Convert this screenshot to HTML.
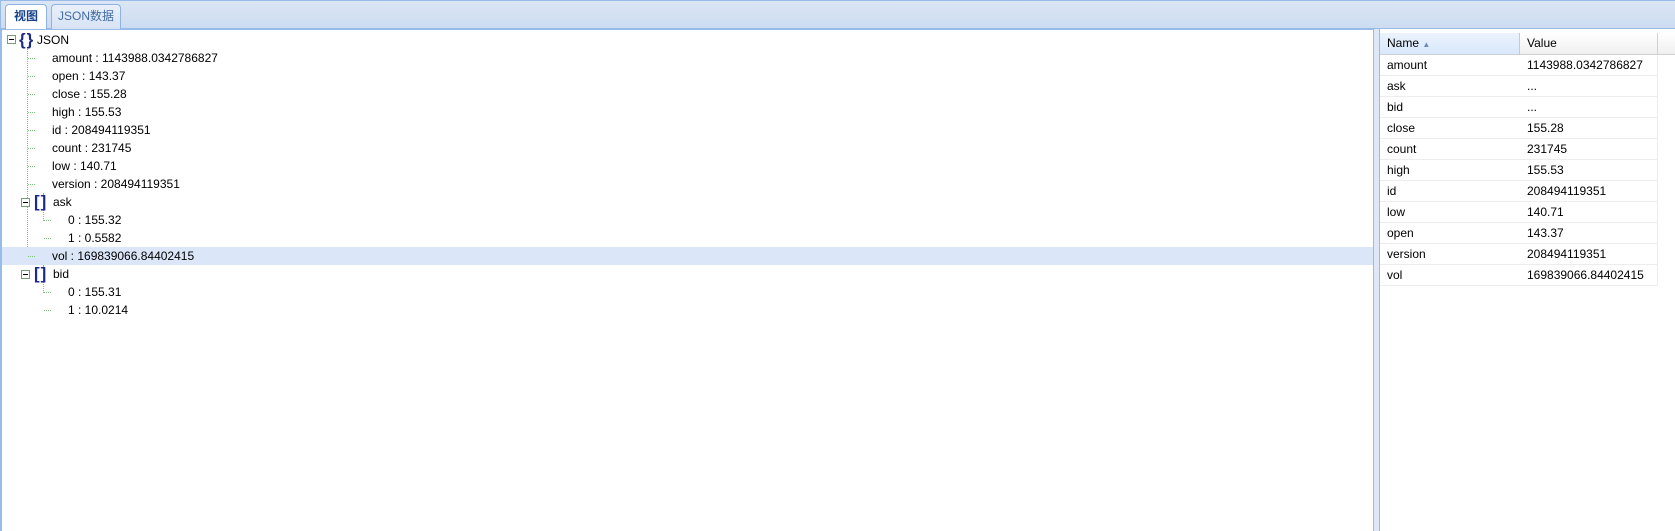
<!DOCTYPE html>
<html><head><meta charset="utf-8"><style>
*{margin:0;padding:0;box-sizing:border-box}
body{width:1675px;height:531px;overflow:hidden;background:#fff;font-family:"Liberation Sans","Noto Sans CJK SC",sans-serif;font-size:12px;color:#000;position:relative}
.bar{position:absolute;left:0;top:0;width:1675px;height:29px;background:linear-gradient(#dbe6f5,#cddcf1);border-top:1px solid #99bbe8;border-left:1px solid #99bbe8;border-bottom:1px solid #99bbe8}
.tab{position:absolute;top:3px;height:25px;border:1px solid #8db2e3;border-bottom:none;border-radius:4px 4px 0 0;line-height:22px;text-align:center;font-size:12px}
.t1{left:4px;width:42px;background:#fff;color:#15428b;font-weight:bold;height:26px}
.t2{left:50px;width:70px;background:linear-gradient(#e9f0fa,#d7e3f4);color:#416aa3}
.left{position:absolute;left:0;top:29px;width:1373px;height:502px;border-left:2px solid #99bbe8;border-top:1px solid #99bbe8}
.split{position:absolute;left:1373px;top:29px;width:7px;height:502px;background:#dfe8f6;border-left:1px solid #99bbe8;border-right:1px solid #99bbe8}
.row{position:absolute;left:0;height:18px;line-height:18px;width:1371px;white-space:nowrap}
.hl{background:#dbe7f8}
.vl{position:absolute;border-left:1px dotted #7cc47c}
.hd{position:absolute;border-top:1px dotted #7cc47c;width:7px}
.box{position:absolute;width:9px;height:9px;border:1px solid #7a9a7a;background:#fff}
.box:after{content:"";position:absolute;left:1px;top:3px;width:5px;height:1px;background:#000}
.ic{position:absolute;color:#1e2a8a;font-weight:bold;font-size:17px;line-height:17px;letter-spacing:1px}
.right{position:absolute;left:1380px;top:30px;width:295px;height:501px}
.hdr{position:absolute;top:3px;height:22px;line-height:21px;padding-left:7px;border-bottom:1px solid #d0d0d0;border-right:1px solid #d0d0d0;background:linear-gradient(#fff,#f0f0f0)}
.r{position:absolute;left:0;width:278px;height:21px;line-height:20px;border-bottom:1px solid #ededed;border-right:1px solid #ededed}
.r span{position:absolute;left:7px}.r b{font-weight:normal;position:absolute;left:147px}
</style></head><body>
<div class="bar"><div class="tab t1">视图</div><div class="tab t2">JSON数据</div></div>
<div class="left">
<div class="vl" style="left:25px;top:19px;height:163px"></div>
<div class="vl" style="left:41px;top:163px;height:28px"></div>
<div class="vl" style="left:25px;top:181px;height:44px"></div>
<div class="vl" style="left:41px;top:235px;height:28px"></div>
<div class="row" style="top:1px"><div class="box" style="left:5px;top:4px"></div><span class="ic" style="left:17px">{}</span><span style="position:absolute;left:35px">JSON</span></div>
<div class="row" style="top:19px"><div class="hd" style="left:26px;top:9px"></div><span style="position:absolute;left:50px">amount : 1143988.0342786827</span></div>
<div class="row" style="top:37px"><div class="hd" style="left:26px;top:9px"></div><span style="position:absolute;left:50px">open : 143.37</span></div>
<div class="row" style="top:55px"><div class="hd" style="left:26px;top:9px"></div><span style="position:absolute;left:50px">close : 155.28</span></div>
<div class="row" style="top:73px"><div class="hd" style="left:26px;top:9px"></div><span style="position:absolute;left:50px">high : 155.53</span></div>
<div class="row" style="top:91px"><div class="hd" style="left:26px;top:9px"></div><span style="position:absolute;left:50px">id : 208494119351</span></div>
<div class="row" style="top:109px"><div class="hd" style="left:26px;top:9px"></div><span style="position:absolute;left:50px">count : 231745</span></div>
<div class="row" style="top:127px"><div class="hd" style="left:26px;top:9px"></div><span style="position:absolute;left:50px">low : 140.71</span></div>
<div class="row" style="top:145px"><div class="hd" style="left:26px;top:9px"></div><span style="position:absolute;left:50px">version : 208494119351</span></div>
<div class="row" style="top:163px"><div class="box" style="left:19px;top:5px"></div><span class="ic" style="left:32px">[]</span><span style="position:absolute;left:51px">ask</span></div>
<div class="row" style="top:181px"><div class="hd" style="left:42px;top:9px"></div><span style="position:absolute;left:66px">0 : 155.32</span></div>
<div class="row" style="top:199px"><div class="hd" style="left:42px;top:9px"></div><span style="position:absolute;left:66px">1 : 0.5582</span></div>
<div class="row hl" style="top:217px"><div class="hd" style="left:26px;top:9px"></div><span style="position:absolute;left:50px">vol : 169839066.84402415</span></div>
<div class="row" style="top:235px"><div class="box" style="left:19px;top:5px"></div><span class="ic" style="left:32px">[]</span><span style="position:absolute;left:51px">bid</span></div>
<div class="row" style="top:253px"><div class="hd" style="left:42px;top:9px"></div><span style="position:absolute;left:66px">0 : 155.31</span></div>
<div class="row" style="top:271px"><div class="hd" style="left:42px;top:9px"></div><span style="position:absolute;left:66px">1 : 10.0214</span></div>
</div>
<div class="split"></div>
<div class="right">
<div class="hdr" style="left:0;width:140px;background:linear-gradient(#ebf3fd,#d9e8fb);border-right:1px solid #b5cde8">Name <span style="color:#6a8ab5;font-size:8px">▲</span></div>
<div class="hdr" style="left:140px;width:138px">Value</div>
<div class="hdr" style="left:278px;width:17px;border-right:none"></div>
<div class="r" style="top:25px"><span>amount</span><b>1143988.0342786827</b></div>
<div class="r" style="top:46px"><span>ask</span><b>...</b></div>
<div class="r" style="top:67px"><span>bid</span><b>...</b></div>
<div class="r" style="top:88px"><span>close</span><b>155.28</b></div>
<div class="r" style="top:109px"><span>count</span><b>231745</b></div>
<div class="r" style="top:130px"><span>high</span><b>155.53</b></div>
<div class="r" style="top:151px"><span>id</span><b>208494119351</b></div>
<div class="r" style="top:172px"><span>low</span><b>140.71</b></div>
<div class="r" style="top:193px"><span>open</span><b>143.37</b></div>
<div class="r" style="top:214px"><span>version</span><b>208494119351</b></div>
<div class="r" style="top:235px"><span>vol</span><b>169839066.84402415</b></div>
</div>
</body></html>
